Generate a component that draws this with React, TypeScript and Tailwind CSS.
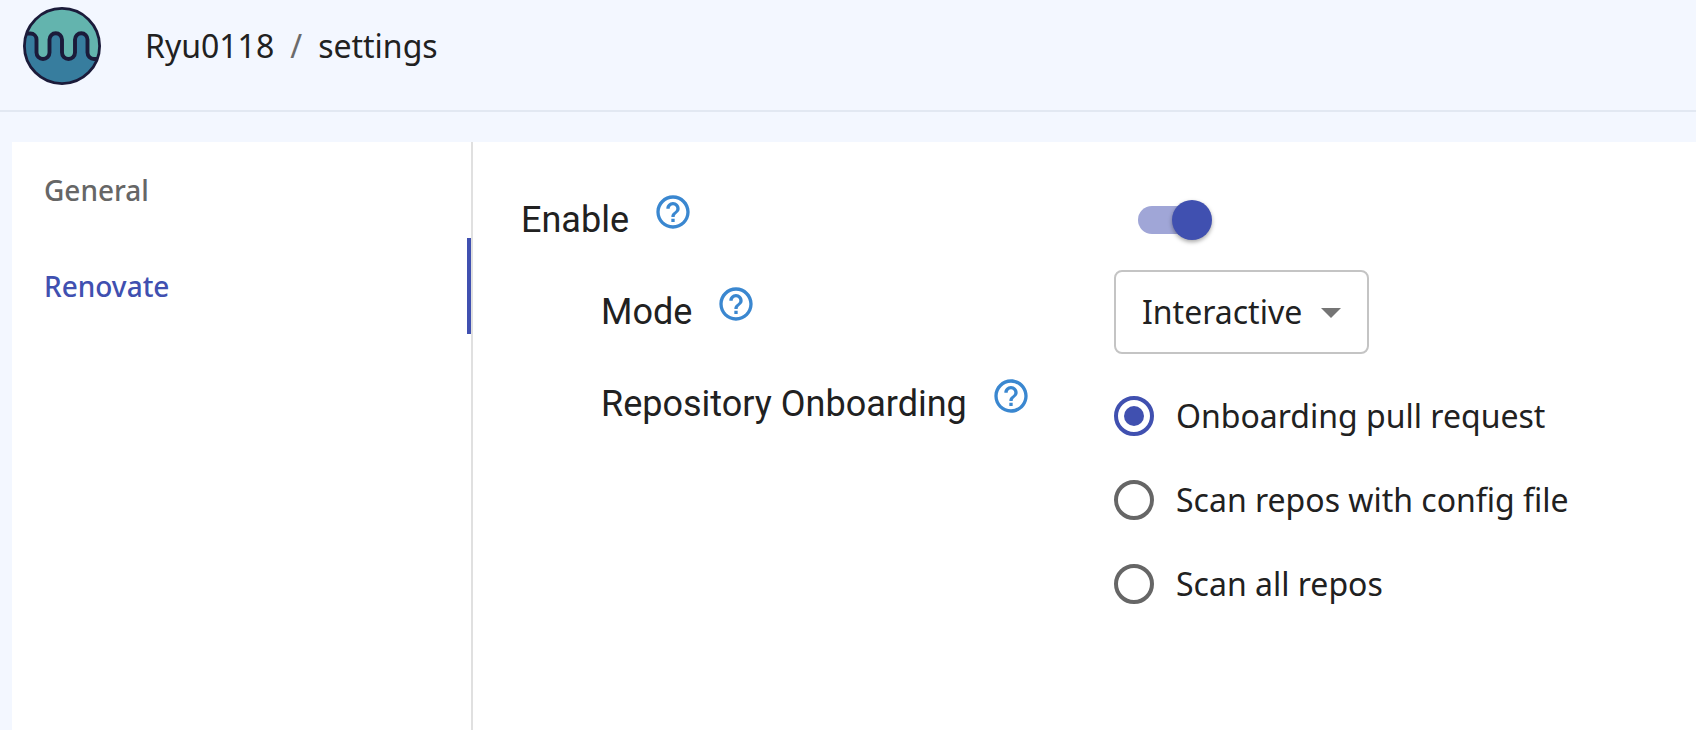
import { useState, type ReactNode } from "react";
import { MdHelpOutline } from "react-icons/md";

const ONBOARDING_OPTIONS = [
  "Onboarding pull request",
  "Scan repos with config file",
  "Scan all repos",
];

function Avatar() {
  return (
    <svg viewBox="0 0 78 78" className="size-[78px] shrink-0" role="img" aria-label="Ryu0118">
      <defs>
        <clipPath id="avatar-disc">
          <circle cx="39" cy="39" r="38" />
        </clipPath>
      </defs>
      <circle cx="39" cy="39" r="38" fill="#63b4ae" />
      <g clipPath="url(#avatar-disc)">
        <path
          d="M-8 90V26.500H7.500a6 6 0 0 1 6 6v13a6.500 6.500 0 0 0 13 0v-13a6.200 6.200 0 0 1 12.500 0v13a6.500 6.500 0 0 0 13 0v-13a6.200 6.200 0 0 1 12.500 0v13a6.500 6.500 0 0 0 6.500 6.500H86V90Z"
          fill="#377d9e"
          stroke="#1b1b3a"
          strokeWidth="3.900"
        />
      </g>
      <circle cx="39" cy="39" r="37.600" fill="none" stroke="#1b1b3a" strokeWidth="2.800" />
    </svg>
  );
}

function Label({ id, nested, children }: { id: string; nested?: boolean; children: ReactNode }) {
  return (
    <div className={nested ? "flex items-start gap-6 pl-20" : "flex items-start gap-6"}>
      <span id={id} className="font-['Roboto',sans-serif] text-4xl leading-[92px] whitespace-nowrap">
        {children}
      </span>
      <button type="button" aria-label="Help" className="mt-[18px] shrink-0 text-[#3a87d0]">
        <MdHelpOutline className="size-10" />
      </button>
    </div>
  );
}

export default function App() {
  const [enabled, setEnabled] = useState(true);
  const [onboarding, setOnboarding] = useState(ONBOARDING_OPTIONS[0]);

  return (
    <div className="flex min-h-screen flex-col bg-[#f3f7ff] font-['Noto_Sans',sans-serif] text-[#212121]">
      <header className="flex h-28 shrink-0 items-start gap-11 border-b-2 border-[#e2e8f2] pt-[7px] pl-[23px]">
        <Avatar />
        <nav aria-label="Breadcrumb" className="flex h-[78px] items-center gap-4 text-[32px]">
          <a href="#account">Ryu0118</a>
          <span className="text-[#6b6b6b]">/</span>
          <a href="#settings">settings</a>
        </nav>
      </header>

      <div className="flex grow pt-[30px] pl-3">
        <nav
          aria-label="Settings sections"
          className="flex w-[461px] shrink-0 flex-col border-r-2 border-[#e0e0e0] bg-white text-[28px] font-medium"
        >
          <a href="#general" className="flex h-24 items-center pl-8 text-[#666666]">
            General
          </a>
          <a
            href="#renovate"
            aria-current="page"
            className="flex h-24 items-center border-r-4 border-[#4050b0] pl-8 text-[#4050b0]"
          >
            Renovate
          </a>
        </nav>

        <main className="grid grow auto-rows-max grid-cols-[593px_1fr] bg-white pt-8 pl-12">
          <Label id="enable-label">Enable</Label>
          <div className="flex items-center pl-6">
            <label className="relative flex h-7 w-[68px] items-center rounded-full bg-[#a0a6d7]">
              <input
                type="checkbox"
                role="switch"
                aria-labelledby="enable-label"
                checked={enabled}
                onChange={(e) => setEnabled(e.target.checked)}
                className="peer absolute inset-0 appearance-none"
              />
              <span className="size-10 shrink-0 rounded-full bg-[#4050b0] shadow-[0_2px_4px_rgba(0,0,0,0.35)] peer-checked:translate-x-[34px]" />
            </label>
          </div>

          <Label id="mode-label" nested>
            Mode
          </Label>
          <div className="flex items-center">
            <div className="relative">
              <select
                aria-labelledby="mode-label"
                className="h-[84px] appearance-none rounded-lg border-2 border-[#c4c4c4] bg-white pr-16 pl-[26px] text-[32px]"
              >
                <option>Interactive</option>
                <option>Silent</option>
              </select>
              <svg
                viewBox="0 0 20 10"
                className="pointer-events-none absolute top-[38px] right-7 h-[10px] w-5 fill-[#757575]"
                aria-hidden="true"
              >
                <path d="M0 0H20L10 10Z" />
              </svg>
            </div>
          </div>

          <Label id="onboarding-label" nested>
            Repository Onboarding
          </Label>
          <div role="radiogroup" aria-labelledby="onboarding-label" className="pt-4">
            {ONBOARDING_OPTIONS.map((option) => (
              <label key={option} className="flex h-[84px] items-center gap-[22px] text-[32px] whitespace-nowrap">
                <input
                  type="radio"
                  name="onboarding"
                  checked={onboarding === option}
                  onChange={() => setOnboarding(option)}
                  className="grid size-10 shrink-0 appearance-none place-items-center rounded-full border-4 border-[#666666] before:size-5 before:rounded-full checked:border-[#4050b0] checked:before:bg-[#4050b0]"
                />
                {option}
              </label>
            ))}
          </div>
        </main>
      </div>
    </div>
  );
}
